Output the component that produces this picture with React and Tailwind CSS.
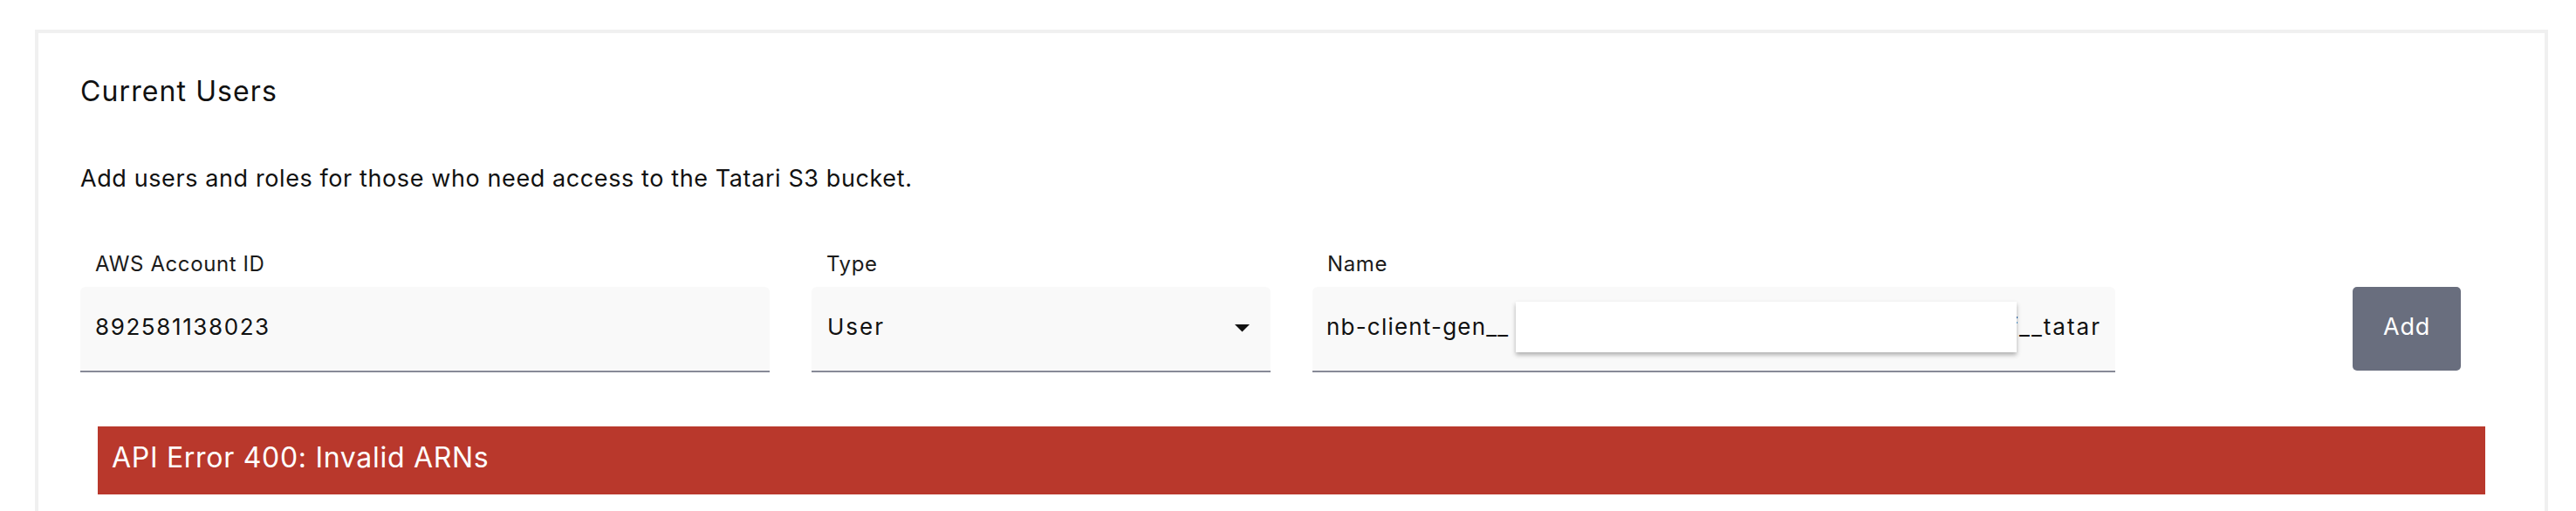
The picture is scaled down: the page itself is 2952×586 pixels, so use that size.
import React from "react";

const font = { fontFamily: 'Inter, "Liberation Sans", sans-serif' };

function Field({ label, width, children, className = "" }) {
  return (
    <div className="flex flex-col" style={{ width }}>
      <div className="h-[28px] pl-[17px] text-[24px] leading-[28px] text-[#1b1b1b] tracking-[0.6px]">{label}</div>
      <div
        className={
          "relative mt-[12px] h-[98px] rounded-t-[6px] bg-[#f9f9f9] border-b-2 border-[#878a97] flex items-center pb-1 " +
          className
        }
      >
        {children}
      </div>
    </div>
  );
}

export default function App() {
  return (
    <div className="min-h-[586px] bg-white pt-[34px] pl-[40px] pr-[32px] overflow-hidden" style={font}>
      <div className="border-4 border-[#f0f0f0] border-b-0 min-h-[560px] bg-white pt-[47px]">
        <div className="pl-[48px] text-[32px] leading-[40px] text-[#111] tracking-[1.1px]">Current Users</div>
        <div className="pl-[48px] mt-[64px] text-[27px] leading-[32px] text-[#111] tracking-[0.6px]">
          Add users and roles for those who need access to the Tatari S3 bucket.
        </div>

        <div className="mt-[68px] pl-[48px] pr-[96px] flex items-start gap-12">
          <Field label="AWS Account ID" width={790}>
            <span className="pl-[17px] text-[26px] leading-[32px] text-[#111] tracking-[1.6px]">892581138023</span>
          </Field>

          <Field label="Type" width={526}>
            <span className="pl-[18px] text-[26px] leading-[32px] text-[#111] tracking-[2px] flex-1">User</span>
            <svg width="17" height="9" viewBox="0 0 17 9" className="mr-[24px] mt-[2px]">
              <polygon points="0,0 17,0 8.5,8.5" fill="#111" />
            </svg>
          </Field>

          <Field label="Name" width={920}>
            <div className="flex-1 mx-[16px] overflow-hidden flex justify-between whitespace-nowrap text-[26px] leading-[32px] text-[#111] tracking-[1.2px]">
              <span>nb-client-gen__</span>
              <span className="tracking-[2px]">f__tatar</span>
            </div>
            <div className="absolute left-[233px] top-[17px] w-[574px] h-[58px] bg-white shadow-[0_3px_5px_rgba(0,0,0,0.3)]" />
          </Field>

          <button className="ml-auto mt-[40px] w-[124px] h-[96px] rounded-[5px] bg-[#696e7e] text-white text-[27px] leading-[32px] tracking-[0.8px] pb-1">
            Add
          </button>
        </div>

        <div className="mt-[62px] mx-[68px] h-[78px] bg-[#b9382c] flex items-center pl-[16px] pb-[6px] text-white text-[32px] leading-[40px] tracking-[0.7px]">
          API Error 400: Invalid ARNs
        </div>
      </div>
    </div>
  );
}
